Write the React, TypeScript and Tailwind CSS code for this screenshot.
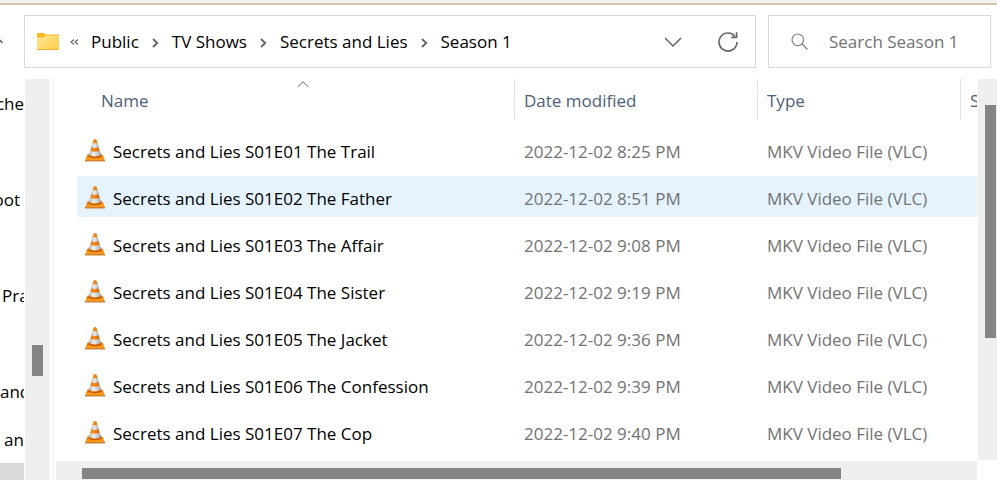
import { Fragment } from 'react';

const crumbs = ['Public', 'TV Shows', 'Secrets and Lies', 'Season 1'];

const navItems = [
  { label: 'che', align: 'justify-end' },
  { label: '', align: '' },
  { label: 'oot', align: 'justify-end pr-1' },
  { label: '', align: '' },
  { label: 'Pra', align: 'pl-0.5' },
  { label: '', align: '' },
  { label: 'and', align: '' },
  { label: 'an', align: 'pl-1' },
];

const files = [
  { name: 'Secrets and Lies S01E01 The Trail', modified: '2022-12-02 8:25 PM' },
  { name: 'Secrets and Lies S01E02 The Father', modified: '2022-12-02 8:51 PM', hovered: true },
  { name: 'Secrets and Lies S01E03 The Affair', modified: '2022-12-02 9:08 PM' },
  { name: 'Secrets and Lies S01E04 The Sister', modified: '2022-12-02 9:19 PM' },
  { name: 'Secrets and Lies S01E05 The Jacket', modified: '2022-12-02 9:36 PM' },
  { name: 'Secrets and Lies S01E06 The Confession', modified: '2022-12-02 9:39 PM' },
  { name: 'Secrets and Lies S01E07 The Cop', modified: '2022-12-02 9:40 PM' },
];

const FolderIcon = () => (
  <svg width="22" height="17" viewBox="0 0 22 17" className="shrink-0">
    <defs>
      <linearGradient id="folder" x1="0" y1="0" x2="1" y2="1">
        <stop offset="0" stopColor="#ffe59a" />
        <stop offset="1" stopColor="#ffcd45" />
      </linearGradient>
    </defs>
    <path d="M0 1a1 1 0 0 1 1-1h6l1.500 1.500H21a1 1 0 0 1 1 1V6H0Z" fill="#fbb61e" />
    <path d="M0 4.500h7L9 2.500h13V16a1 1 0 0 1-1 1H1a1 1 0 0 1-1-1Z" fill="url(#folder)" />
    <path d="M0.500 16.500h21" stroke="#eeb02b" />
  </svg>
);

const ConeIcon = () => (
  <svg width="20" height="24" viewBox="0 0 20 24" className="shrink-0" aria-hidden="true">
    <defs>
      <linearGradient id="orange" x1="0" x2="1">
        <stop offset="0" stopColor="#d9700f" />
        <stop offset="0.4" stopColor="#f98d1d" />
        <stop offset="1" stopColor="#c95a05" />
      </linearGradient>
      <linearGradient id="white" x1="0" x2="1">
        <stop offset="0" stopColor="#b9bdbd" />
        <stop offset="0.4" stopColor="#eef0f0" />
        <stop offset="1" stopColor="#a8adad" />
      </linearGradient>
      <linearGradient id="base" x1="0" y1="0" x2="0" y2="1">
        <stop offset="0" stopColor="#e5760c" />
        <stop offset="1" stopColor="#ffa51f" />
      </linearGradient>
    </defs>
    <path d="M2.500 16.500h15L20 22.500H0Z" fill="url(#base)" />
    <path d="M0 22.200h20v1.200H0Z" fill="#c46a12" />
    <path d="M3.400 18.500Q10 22 16.600 18.500L15.500 15H4.500Z" fill="#b95508" />
    <path d="M8.500 1.700Q10 0.300 11.500 1.700L16 17.500Q10 20.800 4 17.500Z" fill="url(#orange)" />
    <path d="M7.600 4.800Q10 5.800 12.400 4.800L13.700 9.300Q10 10.800 6.300 9.300Z" fill="url(#white)" />
    <path d="M5.400 12.800Q10 14.800 14.600 12.800L15.800 17Q10 19.600 4.200 17Z" fill="url(#white)" />
  </svg>
);

const CrumbChevron = () => (
  <svg width="7" height="10" viewBox="0 0 7 10" fill="none" stroke="#666" strokeWidth="1.900" className="mt-0.5 shrink-0">
    <path d="M1 1l4.200 4L1 9" />
  </svg>
);

const AddressBar = () => (
  <nav className="flex min-w-0 flex-1 items-center border border-[#d9d9d9] pr-[17px] pl-3">
    <FolderIcon />
    <svg width="9" height="6" viewBox="0 0 9 6" fill="none" stroke="#666" strokeWidth="1.200" className="ml-[11px] shrink-0">
      <path d="M4 .500L1 3l3 2.500M8 .500L5 3l3 2.500" />
    </svg>
    <ol className="ml-3 flex flex-1 items-center gap-[13px] whitespace-nowrap">
      {crumbs.map((crumb, index) => (
        <Fragment key={crumb}>
          {index > 0 && <li aria-hidden="true"><CrumbChevron /></li>}
          <li><a href="#" className="text-black">{crumb}</a></li>
        </Fragment>
      ))}
    </ol>
    <button type="button" aria-label="Previous locations" className="mr-9">
      <svg width="18" height="10" viewBox="0 0 18 10" fill="none" stroke="#666" strokeWidth="1.500" className="block">
        <path d="M1 1l8 8 8-8" />
      </svg>
    </button>
    <button type="button" aria-label="Refresh">
      <svg width="20" height="20" viewBox="0 0 20 20" fill="none" stroke="#666" strokeWidth="1.700" className="block">
        <path d="M19 10A9 9 0 1 1 16.800 4.100M18.600 .300v5h-5.300" />
      </svg>
    </button>
  </nav>
);

const SearchBox = () => (
  <label className="flex w-[223px] shrink-0 items-center gap-[21px] border border-[#d9d9d9] pl-[22px]">
    <svg width="17" height="17" viewBox="0 0 17 17" fill="none" stroke="#7b8087" strokeWidth="1.200" className="shrink-0">
      <circle cx="6.800" cy="6.800" r="5.800" />
      <path d="M11 11l5.500 5.500" />
    </svg>
    <input
      type="text"
      aria-label="Search Season 1"
      placeholder="Search Season 1"
      className="w-full min-w-0 outline-none placeholder:text-[#737373]"
    />
  </label>
);

const Sidebar = () => (
  <aside className="flex w-[54px] shrink-0 border-r-2 border-[#f5f5f5]">
    <ul className="mr-px w-6 overflow-hidden whitespace-nowrap">
      {navItems.map((item, index) => (
        <li key={index} className={`flex h-12 items-center pt-0.5 ${item.align}`}>{item.label}</li>
      ))}
      <li className="h-12 bg-[#d9d9d9]" />
    </ul>
    <div className="w-[25px] bg-[#efefef] pt-[266px] pl-[7px]">
      <div className="h-[31px] w-[11px] bg-[#858585]" />
    </div>
  </aside>
);

const FileTable = () => (
  <div className="min-h-0 flex-1 overflow-hidden pl-[21px]">
    <table className="w-full table-fixed border-separate border-spacing-0 text-left whitespace-nowrap">
      <thead>
        <tr className="h-[47px] align-top text-[#4c607a]">
          <th className="p-0 pl-3.5 font-normal">
            <div className="relative flex h-[41px] items-center border-r border-[#e3e3e3] pt-0.5 pl-2.5">
              Name
              <svg width="12" height="7" viewBox="0 0 12 7" fill="none" stroke="#666" className="absolute inset-x-0 top-0.5 mx-auto">
                <path d="M.500 6L6 .700 11.500 6" />
              </svg>
            </div>
          </th>
          <th className="w-[243px] p-0 font-normal">
            <div className="flex h-[41px] items-center border-r border-[#e3e3e3] pt-0.5 pl-[9px]">Date modified</div>
          </th>
          <th className="w-[203px] p-0 font-normal">
            <div className="flex h-[41px] items-center border-r border-[#e3e3e3] pt-0.5 pl-[9px]">Type</div>
          </th>
          <th className="w-4 overflow-hidden p-0 font-normal">
            <div className="flex h-[41px] items-center pt-0.5 pl-[9px]">Size</div>
          </th>
        </tr>
      </thead>
      <tbody>
        {files.map((file) => (
          <tr
            key={file.name}
            className={`h-[47px] text-[#737373] *:border-y-[3px] *:border-transparent *:bg-clip-padding *:p-0 ${file.hovered ? '*:bg-[#e5f3ff]' : ''}`}
          >
            <td className="text-black">
              <div className="flex items-center gap-2 pl-2">
                <ConeIcon />
                <span className="pt-1">{file.name}</span>
              </div>
            </td>
            <td><div className="pt-1 pl-[9px]">{file.modified}</div></td>
            <td><div className="pt-1 pl-[9px]">MKV Video File (VLC)</div></td>
            <td />
          </tr>
        ))}
      </tbody>
    </table>
  </div>
);

const App = () => {
  return (
    <div className="flex h-screen flex-col overflow-hidden bg-white font-['Open_Sans',sans-serif] text-[17px] leading-6 text-black">
      <div className="h-[5px] shrink-0 border-b-2 border-[#d5c6b8] bg-[#f6f2ee]" />
      <header className="mt-2.5 flex h-[53px] shrink-0 gap-3 pr-1.5">
        <div className="flex w-3 shrink-0 items-center">
          <svg width="3" height="5" viewBox="0 0 3 5" fill="none" stroke="#666" strokeWidth="1.500">
            <path d="M0 1l2.500 3" />
          </svg>
        </div>
        <AddressBar />
        <SearchBox />
      </header>
      <div className="mt-[11px] flex min-h-0 flex-1">
        <Sidebar />
        <main className="ml-0.5 flex min-w-0 flex-1 flex-col">
          <FileTable />
          <div className="h-[19px] shrink-0 bg-[#efefef] pt-[7px] pr-[136px] pl-[26px]">
            <div className="h-[11px] bg-[#858585]" />
          </div>
        </main>
        <div className="mb-5 ml-px w-[19px] shrink-0 bg-[#efefef] pt-[26px] pl-[7px]">
          <div className="h-[233px] w-[11px] bg-[#858585]" />
        </div>
      </div>
    </div>
  );
};

export default App;
